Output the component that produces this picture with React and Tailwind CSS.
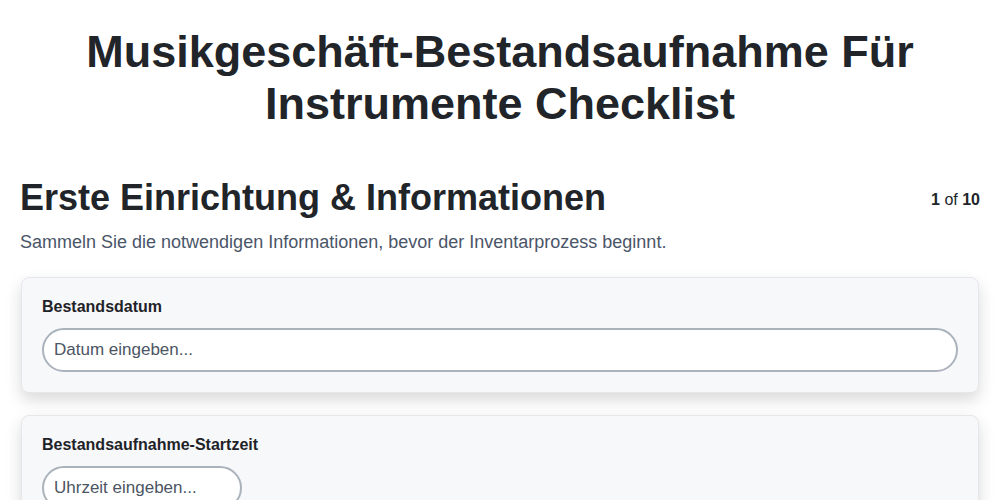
import React from "react";

const Field = ({ label, placeholder, narrow }) => (
  <div className="mx-px rounded-lg border border-[#e5e7eb] bg-[#f7f8fa] px-5 pt-[17px] pb-5 shadow-[0_7px_16px_rgba(0,0,0,0.15)]">
    <label className="block text-base font-bold text-[#1f2328]">{label}</label>
    <input
      type="text"
      placeholder={placeholder}
      className={`mt-[9px] block h-[44px] rounded-full border-2 border-[#aab2bb] bg-white px-[10px] text-[17px] text-[#1f2328] outline-none placeholder:text-[#4b5563] ${
        narrow ? "w-[200px]" : "w-full"
      }`}
    />
  </div>
);

export default function App() {
  return (
    <div className="min-h-screen bg-white px-5 font-['Liberation_Sans',Arial,sans-serif] text-[#212529]">
      <h1 className="pt-[26px] text-center text-[45px] font-bold leading-[52px]">
        Musikgeschäft-Bestandsaufnahme Für
        <br />
        Instrumente Checklist
      </h1>

      <div className="mt-[46px] flex items-start justify-between">
        <h2 className="text-4xl font-bold leading-[44px]">
          Erste Einrichtung &amp; Informationen
        </h2>
        <p className="mt-3 text-base">
          <span className="font-bold">1</span> of <span className="font-bold">10</span>
        </p>
      </div>
      <p className="mt-2 text-lg text-[#4a5568]">
        Sammeln Sie die notwendigen Informationen, bevor der Inventarprozess beginnt.
      </p>

      <div className="mt-[21px] flex flex-col gap-[22px]">
        <Field label="Bestandsdatum" placeholder="Datum eingeben..." />
        <Field label="Bestandsaufnahme-Startzeit" placeholder="Uhrzeit eingeben..." narrow />
      </div>
    </div>
  );
}
